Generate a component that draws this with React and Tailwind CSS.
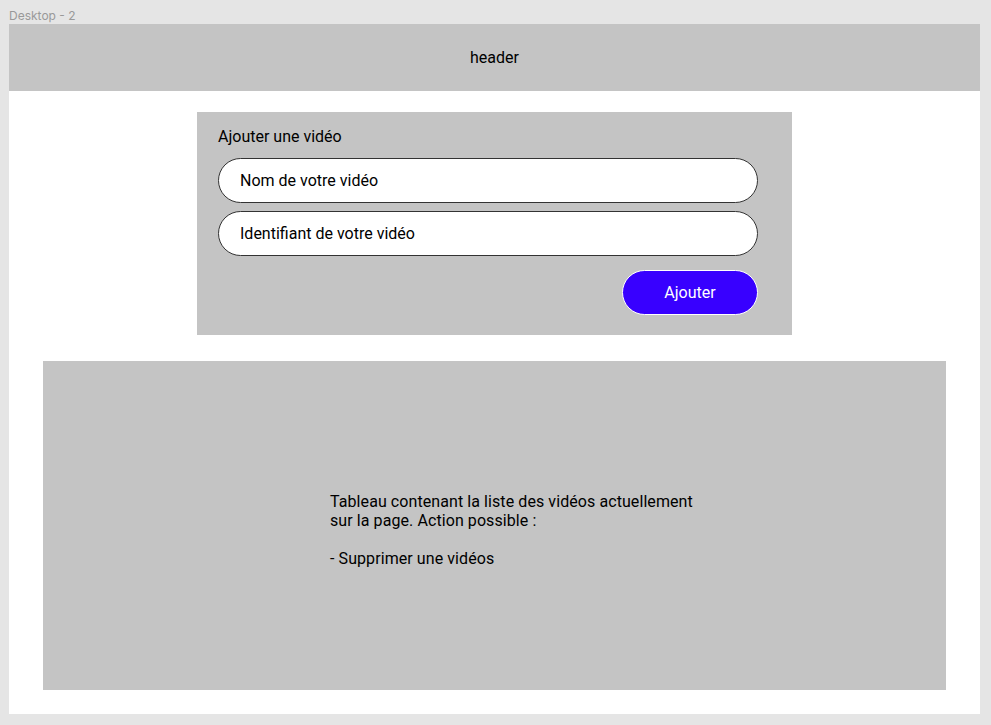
import React from 'react';

export default function App() {
  return (
    <div className="h-[725px] w-full bg-[#e5e5e5] font-['Roboto',sans-serif] text-black overflow-hidden">
      <div className="h-6 pl-[9px] pt-[9px] text-[12px] leading-[13px] text-[#999999] font-['Inter',sans-serif]">Desktop - 2</div>
      <div className="ml-[9px] w-[971px] h-[690px] bg-white flex flex-col">
        <header className="h-[67px] bg-[#c4c4c4] flex items-center justify-center text-base">header</header>

        <section className="mt-[21px] ml-[188px] w-[595px] h-[223px] bg-[#c4c4c4] pl-[21px] pt-[15px]">
          <h2 className="text-base leading-[19px]">Ajouter une vidéo</h2>
          <div className="mt-[12px] flex flex-col gap-2 w-[540px]">
            <input
              type="text"
              placeholder="Nom de votre vidéo"
              className="h-[45px] rounded-full border border-[#333] bg-white pl-[21px] text-base placeholder:text-black outline-none"
            />
            <input
              type="text"
              placeholder="Identifiant de votre vidéo"
              className="h-[45px] rounded-full border border-[#333] bg-white pl-[21px] text-base placeholder:text-black outline-none"
            />
          </div>
          <div className="mt-[14px] w-[540px] flex justify-end">
            <button className="h-[45px] w-[136px] rounded-full bg-[#3800ff] border border-white text-white text-base">
              Ajouter
            </button>
          </div>
        </section>

        <section className="mt-[26px] ml-[34px] w-[903px] h-[329px] bg-[#c4c4c4] flex items-center pl-[287px]">
          <div className="text-base leading-[19px] mt-[8px] tracking-[0.08px]">
            <p>Tableau contenant la liste des vidéos actuellement</p>
            <p>sur la page. Action possible :</p>
            <p className="mt-[19px]">- Supprimer une vidéos</p>
          </div>
        </section>
      </div>
    </div>
  );
}
